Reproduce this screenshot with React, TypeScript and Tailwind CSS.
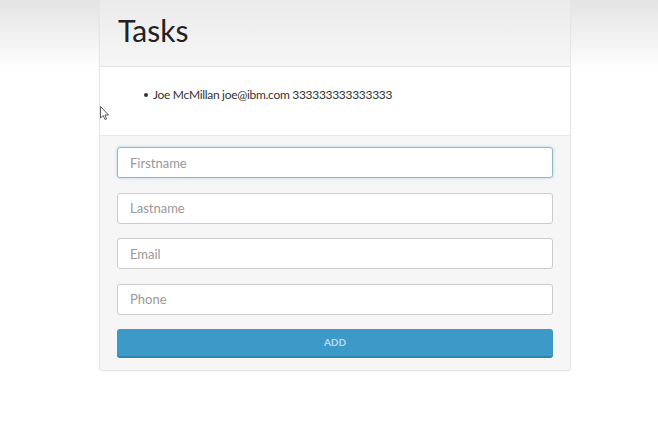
const fields = ["Firstname", "Lastname", "Email", "Phone"]

export default function App() {
  return (
    <div
      className="relative h-[447px] w-[658px] overflow-hidden bg-gradient-to-b from-[#e4e4e4] via-white via-[16%] to-white"
      style={{ fontFamily: "Lato, 'Open Sans', sans-serif" }}
    >
      <div className="ml-[99px] w-[472px] rounded-b-[4px] border border-t-0 border-[#e6e6e6] bg-[#f6f6f6] shadow-[0_1px_2px_rgba(0,0,0,0.04)]">
        <div className="h-[67px] border-b border-[#e4e4e4] bg-gradient-to-b from-[#ebebeb] to-[#f6f6f6] px-[18px] pt-[12px]">
          <h1 className="text-[30px] leading-[36px] text-[#222]">Tasks</h1>
        </div>
        <div className="h-[69px] border-b border-[#e8e8e8] bg-white pl-[44px] pt-[19px]">
          <ul className="text-[12px] tracking-[-0.3px] text-[#333]">
            <li className="flex items-center gap-[5px]">
              <span className="h-[4px] w-[4px] rounded-full bg-[#333]" />
              Joe McMillan joe@ibm.com 333333333333333
            </li>
          </ul>
        </div>
        <div className="flex flex-col gap-[14.5px] px-[17px] pb-[12px] pt-[11px]">
          {fields.map((f, i) => (
            <input
              key={f}
              placeholder={f}
              className={`h-[31px] w-full rounded-[3px] border bg-white px-[12px] text-[13px] text-[#555] placeholder:text-[#999] outline-none ${
                i === 0
                  ? "border-[#8fbcc4] shadow-[0_0_3px_rgba(102,175,233,0.5)]"
                  : "border-[#ccc]"
              }`}
            />
          ))}
          <button className="h-[29px] w-full rounded-[3px] border-b-2 border-[#2e84b1] bg-[#3c99c8] text-[10px] font-bold text-[#b9dbee]">
            ADD
          </button>
        </div>
      </div>
      <svg
        className="absolute left-[100px] top-[106px]"
        width="10"
        height="16"
        viewBox="0 0 10 16"
      >
        <path d="M0.5 0.5 L0.5 12 L3.2 9.5 L5 13.5 L6.6 12.8 L4.9 9 L8.5 9 Z" fill="white" stroke="#333" strokeWidth="0.8" />
      </svg>
    </div>
  )
}
